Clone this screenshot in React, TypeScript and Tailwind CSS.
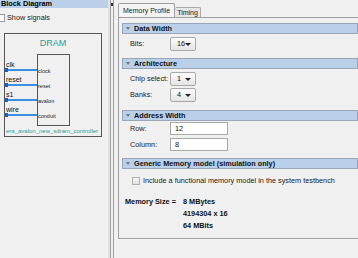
import React from "react";

const ports = [
  { outer: "clk", inner: "clock" },
  { outer: "reset", inner: "reset" },
  { outer: "s1", inner: "avalon" },
  { outer: "wire", inner: "conduit" },
];

function Dropdown({ value }: { value: string }) {
  return (
    <div className="flex h-[14px] w-[26px] items-center justify-between rounded-[2px] border border-[#a8a8a8] bg-gradient-to-b from-[#fcfcfc] to-[#e4e4e4] pl-[6px] pr-[4px]">
      <span>{value}</span>
      <span className="h-0 w-0 border-x-[3px] border-t-[3px] border-x-transparent border-t-[#222]" />
    </div>
  );
}

function TextBox({ value }: { value: string }) {
  return (
    <div className="flex h-[13px] w-[58px] items-center border border-[#a8a8a8] bg-white pl-[4px]">
      {value}
    </div>
  );
}

function GroupHeader({ title }: { title: string }) {
  return (
    <div className="flex h-[11px] items-center border border-[#98a6b6] bg-[#b9d0e8] pl-[3px]">
      <span className="mr-[4px] h-0 w-0 border-x-[2px] border-t-[3px] border-x-transparent border-t-[#6a7a8a]" />
      <span className="font-bold text-[#111]">{title}</span>
    </div>
  );
}

function Row({ label, children }: { label: string; children: React.ReactNode }) {
  return (
    <div className="flex items-center pl-[8px]">
      <span className="w-[40px] whitespace-nowrap text-[#222]">{label}</span>
      {children}
    </div>
  );
}

export default function App() {
  return (
    <div
      className="flex h-[258px] w-[358px] overflow-hidden bg-[#f0f0f0] text-[7.3px] leading-none text-[#111]"
      style={{ fontFamily: '"Liberation Sans", Arial, sans-serif' }}
    >
      {/* left: block diagram */}
      <div className="flex w-[108px] shrink-0 flex-col">
        <div className="flex h-[8px] items-center bg-[#b9d0e8] pl-[1px] text-[7.3px] font-bold text-[#000]">
          Block Diagram
        </div>
        <div className="mt-[5px] flex h-[9px] items-center">
          <span className="ml-[-3px] h-[8px] w-[8px] border border-[#9a9a9a] bg-white" />
          <span className="ml-[2px] text-[#222]">Show signals</span>
        </div>
        <div className="ml-[4px] mt-[11px] flex w-[98px] flex-col items-center border border-[#555] pt-[4px] pb-[1px]">
          <div className="text-[9px] leading-[10px] text-[#2a9d9a]">DRAM</div>
          <div className="mt-[6px] flex w-full">
            <div className="flex w-[32px] flex-col pt-[6px]">
              {ports.map((p) => (
                <div key={p.outer} className="flex h-[15px] flex-col">
                  <span className="pl-[1px] text-[7px] leading-[9px] text-[#111]">{p.outer}</span>
                  <div className="flex h-[2px] items-center bg-[#3b8fe0]">
                    <span className="h-[4px] w-[3px] bg-[#1a5fd0]" />
                  </div>
                </div>
              ))}
            </div>
            <div className="flex h-[72px] w-[33px] flex-col border border-[#555] pt-[6px]">
              {ports.map((p) => (
                <div key={p.inner} className="h-[15px]">
                  <div className="mt-[7px] text-[5.5px] leading-[6px] text-[#222]">{p.inner}</div>
                </div>
              ))}
            </div>
          </div>
          <div className="mt-[1px] w-full whitespace-nowrap pl-[1px] text-[6px] leading-[8px] text-[#2a9d9a]">
            era_avalon_new_sdram_controller
          </div>
        </div>
      </div>

      {/* splitter */}
      <div className="flex w-[6px] shrink-0">
        <div className="w-[2px] bg-[#e2e2e2]" />
        <div className="w-[1px] bg-[#a0a0a0]" />
        <div className="w-[2px]">
          <div className="mt-[3px] h-[3px] w-[2px] bg-[#333]" />
        </div>
        <div className="w-[1px] bg-[#a0a0a0]" />
      </div>

      {/* right: parameters */}
      <div className="flex flex-col pl-[4px]">
        <div className="flex h-[17px] items-end">
          <div className="flex h-[14px] w-[57px] items-center justify-center whitespace-nowrap rounded-t-[2px] border-x border-t border-[#a0a0a0] bg-[#f4f4f4] text-[7px] text-[#222]">
            Memory Profile
          </div>
          <div className="flex h-[10px] w-[26px] items-center justify-center rounded-t-[2px] border-r border-t border-[#a8a8a8] bg-[#e6e6e6] text-[7px] text-[#222]">
            Timing
          </div>
        </div>
        <div className="flex h-[222px] w-[244px] flex-col border border-[#a0a0a0] px-[3px] pt-[5px]">
          <GroupHeader title="Data Width" />
          <div className="flex flex-col pt-[3px] pb-[7px]">
            <Row label="Bits:">
              <Dropdown value="16" />
            </Row>
          </div>

          <GroupHeader title="Architecture" />
          <div className="flex flex-col gap-[2px] pt-[3px] pb-[8px]">
            <Row label="Chip select:">
              <Dropdown value="1" />
            </Row>
            <Row label="Banks:">
              <Dropdown value="4" />
            </Row>
          </div>

          <GroupHeader title="Address Width" />
          <div className="flex flex-col gap-[3px] pt-[1px] pb-[7px]">
            <Row label="Row:">
              <TextBox value="12" />
            </Row>
            <Row label="Column:">
              <TextBox value="8" />
            </Row>
          </div>

          <GroupHeader title="Generic Memory model (simulation only)" />
          <div className="mt-[8px] flex items-center pl-[10px]">
            <span className="h-[8px] w-[8px] border border-[#b0b0b0] bg-gradient-to-b from-[#f6f6f6] to-[#e0e0e0]" />
            <span className="ml-[3px] text-[#222]">
              Include a functional memory model in the system testbench
            </span>
          </div>

          <div className="mt-[11px] flex pl-[3px] font-bold leading-[12px] text-[#111]">
            <span className="w-[58px]">Memory Size =</span>
            <div className="flex flex-col">
              <span>8 MBytes</span>
              <span>4194304 x 16</span>
              <span>64 MBits</span>
            </div>
          </div>
        </div>
      </div>
    </div>
  );
}
